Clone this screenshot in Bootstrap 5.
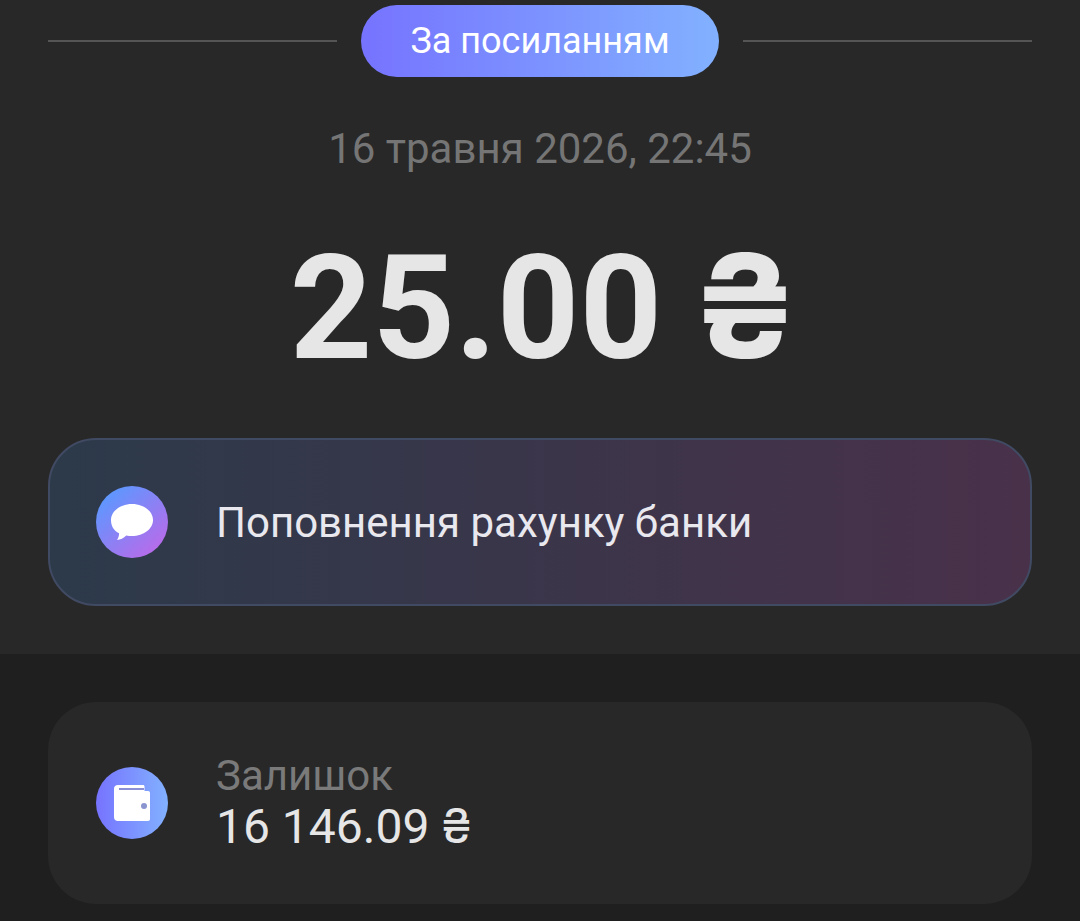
<!DOCTYPE html>
<html lang="uk">
<head>
  <meta charset="UTF-8" />
  <title>Платіж</title>
  <link href="https://cdn.jsdelivr.net/npm/bootstrap@5.3.3/dist/css/bootstrap.min.css" rel="stylesheet" />
  <style>
    body { background: #1f1f1f; font-family: Roboto, sans-serif; height: 921px; overflow: hidden; }
    .top-part { background: #282828; height: 654px; padding: 5px 48px 0; }
    .divider-line { height: 2px; background: #555; flex: 1 1 0; }
    .type-pill { width: 358px; height: 72px; border-radius: 36px; background: linear-gradient(90deg, #7673ff, #82b1ff); color: #fff; font-size: 36px; }
    .date-line { color: #757575; font-size: 42px; line-height: 48px; margin-top: 48px; }
    .amount-line { color: #e6e6e6; font-size: 144px; font-weight: 700; line-height: 168px; margin-top: 52px; padding-left: 8px; }
    .amount-line .hrn-sign { margin-left: -6px; }
    .hrn-sign { font-family: Inter, sans-serif; line-height: 0; }
    .comment-box { height: 168px; margin-top: 45px; border: 2px solid #414a63; border-radius: 48px; background: linear-gradient(90deg, #2c3a4a, #49314a); padding-left: 46px; gap: 48px; color: #e8e8ee; font-size: 42px; }
    .round-icon { width: 72px; height: 72px; flex: none; }
    .bottom-part { padding: 48px 48px 0; }
    .balance-box { height: 202px; background: #282828; border-radius: 48px; padding-left: 48px; gap: 48px; }
    .balance-label { color: #7a7a7a; font-size: 42px; line-height: 47px; }
    .balance-value { color: #e6e6e6; font-size: 48px; line-height: 56px; }
  </style>
</head>
<body>
  <div class="top-part">
    <div class="d-flex align-items-center gap-4">
      <div class="divider-line"></div>
      <div class="type-pill d-flex align-items-center justify-content-center">За посиланням</div>
      <div class="divider-line"></div>
    </div>
    <div class="date-line text-center">16 травня 2026, 22:45</div>
    <div class="amount-line text-center">25.00 <span class="hrn-sign">₴</span></div>
    <div class="comment-box d-flex align-items-center">
      <svg class="round-icon" viewBox="0 0 72 72">
        <defs>
          <linearGradient id="gradChat" x1="0.15" y1="0.1" x2="0.85" y2="0.9">
            <stop offset="0" stop-color="#5c98ff" />
            <stop offset="1" stop-color="#b86bea" />
          </linearGradient>
        </defs>
        <circle cx="36" cy="36" r="36" fill="url(#gradChat)" />
        <path d="M36 18c11.700 0 21 7.200 21 16s-9.300 16-21 16c-2 0-3.900-.2-5.700-.6-2.600 2.800-6 4.100-9.300 4.600 1.300-1.900 2-4 2.100-6.700C17.800 45 15 39.800 15 34c0-8.800 9.300-16 21-16z" fill="#fff" />
      </svg>
      <span>Поповнення рахунку банки</span>
    </div>
  </div>
  <div class="bottom-part">
    <div class="balance-box d-flex align-items-center">
      <svg class="round-icon" viewBox="0 0 72 72">
        <defs>
          <linearGradient id="gradWallet" x1="0" y1="0" x2="1" y2="0">
            <stop offset="0" stop-color="#7673ff" />
            <stop offset="1" stop-color="#82b1ff" />
          </linearGradient>
        </defs>
        <circle cx="36" cy="36" r="36" fill="url(#gradWallet)" />
        <path d="M22 18h25c1 0 1.500.6 1.500 1.500V24H52c1.300 0 2 .8 2 2v26c0 1.300-.7 2-2 2H22c-2.500 0-4-1.500-4-4V22c0-2.500 1.500-4 4-4z" fill="#fff" />
        <rect x="23" y="21" width="25" height="2" fill="#8a8fd6" />
        <circle cx="48" cy="39" r="3" fill="#8a95d0" />
      </svg>
      <div>
        <div class="balance-label">Залишок</div>
        <div class="balance-value">16 146.09 <span class="hrn-sign">₴</span></div>
      </div>
    </div>
  </div>
  <script src="https://cdn.jsdelivr.net/npm/bootstrap@5.3.3/dist/js/bootstrap.bundle.min.js"></script>
</body>
</html>
